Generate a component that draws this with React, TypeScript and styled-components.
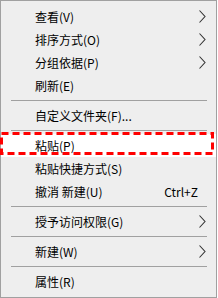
import React from "react";
import styled, { createGlobalStyle } from "styled-components";

const Global = createGlobalStyle`
  html, body { margin: 0; padding: 0; background: #ffffff; }
  body { font-family: "Noto Sans CJK SC", "Noto Sans", sans-serif; }
`;

const Menu = styled.div`
  position: relative;
  box-sizing: border-box;
  width: 217px;
  height: 298px;
  border: 1px solid #a0a0a0;
  background: #eeeeee;
  padding: 4px 0;
  display: flex;
  flex-direction: column;
`;

const Row = styled.div<{ $active?: boolean }>`
  height: 23px;
  flex: none;
  display: flex;
  align-items: center;
  padding: 0 10px 0 34px;
  background: ${(p) => (p.$active ? "#ffffff" : "transparent")};
  font-size: 12px;
  line-height: 23px;
  color: #000000;
  white-space: nowrap;
`;

const Label = styled.span`
  flex: 1;
`;

const Shortcut = styled.span`
  margin-right: 1px;
`;

const ArrowSlot = styled.span`
  width: 7px;
  height: 13px;
  display: flex;
`;

const Separator = styled.div`
  flex: none;
  height: 7px;
  display: flex;
  align-items: center;
  padding: 0 9px 0 10px;
  &::before {
    content: "";
    flex: 1;
    height: 1px;
    background: #a0a0a0;
  }
`;

const Mark = styled.svg`
  position: absolute;
  left: -1px;
  top: 131px;
  width: 214px;
  height: 23px;
  pointer-events: none;
`;

const Chevron = () => (
  <svg width="7" height="13" viewBox="0 0 7 13">
    <polyline points="0.5,0.5 6,6.5 0.5,12.5" fill="none" stroke="#333" strokeWidth="1.1" />
  </svg>
);

type Item = { label: string; sub?: boolean; shortcut?: string; active?: boolean } | "sep";

const items: Item[] = [
  { label: "查看(V)", sub: true },
  { label: "排序方式(O)", sub: true },
  { label: "分组依据(P)", sub: true },
  { label: "刷新(E)" },
  "sep",
  { label: "自定义文件夹(F)..." },
  "sep",
  { label: "粘贴(P)", active: true },
  { label: "粘贴快捷方式(S)" },
  { label: "撤消 新建(U)", shortcut: "Ctrl+Z" },
  "sep",
  { label: "授予访问权限(G)", sub: true },
  "sep",
  { label: "新建(W)", sub: true },
  "sep",
  { label: "属性(R)" },
];

export default function App() {
  return (
    <>
      <Global />
      <Menu>
        {items.map((it, i) =>
          it === "sep" ? (
            <Separator key={i} />
          ) : (
            <Row key={i} $active={it.active}>
              <Label>{it.label}</Label>
              {it.shortcut && <Shortcut>{it.shortcut}</Shortcut>}
              <ArrowSlot>{it.sub && <Chevron />}</ArrowSlot>
            </Row>
          )
        )}
        <Mark viewBox="0 0 214 23">
          <rect x="1.5" y="1.5" width="211" height="20" fill="none" stroke="#ff0000" strokeWidth="3" strokeDasharray="7 4" />
        </Mark>
      </Menu>
    </>
  );
}
